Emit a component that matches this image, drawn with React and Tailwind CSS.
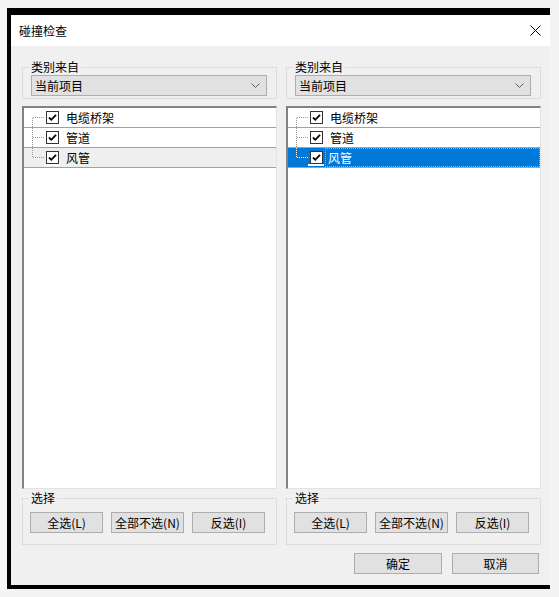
import React from "react";

const items = ["电缆桥架", "管道", "风管"];
const font = { fontFamily: '"Noto Sans CJK SC", "Noto Sans", sans-serif' };

function Check() {
  return (
    <span className="w-[13px] h-[13px] border border-[#333] bg-white flex items-center justify-center shrink-0">
      <svg width="11" height="11" viewBox="0 0 11 11">
        <path d="M2 5.5 L4.3 7.8 L9 2.8" fill="none" stroke="#000" strokeWidth="1.8" />
      </svg>
    </span>
  );
}

function Connector({ i, light }) {
  const c = light ? "#fff" : "#9a9a9a";
  const top = i === 0 ? 10 : 0;
  const bottom = i === items.length - 1 ? 10 : 20;
  return (
    <svg width="22" height="20" className="shrink-0">
      <line x1="8.5" y1={top} x2="8.5" y2={bottom} stroke={c} strokeDasharray="1 1" />
      <line x1="9" y1="9.5" x2="21" y2="9.5" stroke={c} strokeDasharray="1 1" />
    </svg>
  );
}

function TreeList({ selected }) {
  return (
    <div className="mt-[7px] h-[383px] bg-white border-t-2 border-l-2 border-[#828282] border-r border-r-[#e3e3e3] border-b border-b-[#e3e3e3]">
      {items.map((t, i) => {
        const sel = selected && i === 2;
        const last = i === 2;
        return (
          <div
            key={t}
            className={
              "relative h-[20px] flex items-start border-b border-[#a0a0a0] " +
              (sel ? "bg-[#0078d7]" : last ? "bg-[#efefef]" : "bg-white")
            }
          >
            <Connector i={i} light={sel} />
            <span className="mt-[3px]">
              <Check />
            </span>
            {sel ? (
              <span className="ml-[2px] flex-1 h-[19px] border border-dotted border-[#ff9a3c] pl-[2px] text-[12px] leading-[17px] text-white">
                {t}
              </span>
            ) : (
              <span className="ml-[7px] text-[12px] leading-[19px] text-black">{t}</span>
            )}
            {last && (
              <span className="absolute left-[20px] top-[16px] w-[16px] h-[2px] bg-white" />
            )}
          </div>
        );
      })}
    </div>
  );
}

function Btn({ children, w }) {
  return (
    <button className={"h-[21px] bg-[#e1e1e1] border border-[#adadad] text-[12px] leading-[19px] text-black " + w}>
      {children}
    </button>
  );
}

function Column({ selected }) {
  return (
    <div className="flex flex-col">
      <div className="relative mt-[21px] h-[32px] border border-[#dcdcdc] pt-[7px] pl-[8px] pr-[9px] pb-[2px]">
        <span className="absolute left-[6px] -top-[9px] px-[2px] bg-[#f0f0f0] text-[12px] leading-[16px] text-black">
          类别来自
        </span>
        <div className="h-[21px] bg-[#e1e1e1] border border-[#adadad] flex items-center justify-between pl-[3px] pr-[6px]">
          <span className="text-[12px] leading-[19px] text-black">当前项目</span>
          <svg width="9" height="5" viewBox="0 0 9 5">
            <path d="M0.5 0.5 L4.5 4.5 L8.5 0.5" fill="none" stroke="#606060" />
          </svg>
        </div>
      </div>
      <TreeList selected={selected} />
      <div className="relative mt-[9px] h-[47px] border border-[#dcdcdc] pt-[13px] pl-[7px] flex gap-[8px]">
        <span className="absolute left-[6px] -top-[9px] px-[2px] bg-[#f0f0f0] text-[12px] leading-[16px] text-black">
          选择
        </span>
        <Btn w="w-[73px]">全选(L)</Btn>
        <Btn w="w-[73px]">全部不选(N)</Btn>
        <Btn w="w-[73px]">反选(I)</Btn>
      </div>
    </div>
  );
}

export default function App() {
  return (
    <div className="w-[559px] h-[597px] bg-[#f4f4f4] pt-[8px] pl-[7px]" style={font}>
      <div className="w-[543px] h-[581px] flex flex-col border-t-[7px] border-l-[4px] border-b-[4px] border-black">
        <div className="h-[31px] bg-white flex items-center justify-between pl-[8px] pr-[9px]">
          <span className="text-[12px] text-black">碰撞检查</span>
          <svg width="11" height="11" viewBox="0 0 11 11">
            <path d="M0.5 0.5 L10.5 10.5 M10.5 0.5 L0.5 10.5" stroke="#000" strokeWidth="1" />
          </svg>
        </div>
        <div className="flex-1 bg-[#f0f0f0] pl-[11px] pr-[9px] flex flex-col">
          <div className="grid grid-cols-2 gap-x-[9px]">
            <Column selected={false} />
            <Column selected={true} />
          </div>
          <div className="mt-[8px] mr-[2px] flex justify-end gap-[10px]">
            <Btn w="w-[88px]">确定</Btn>
            <Btn w="w-[87px]">取消</Btn>
          </div>
        </div>
      </div>
    </div>
  );
}
